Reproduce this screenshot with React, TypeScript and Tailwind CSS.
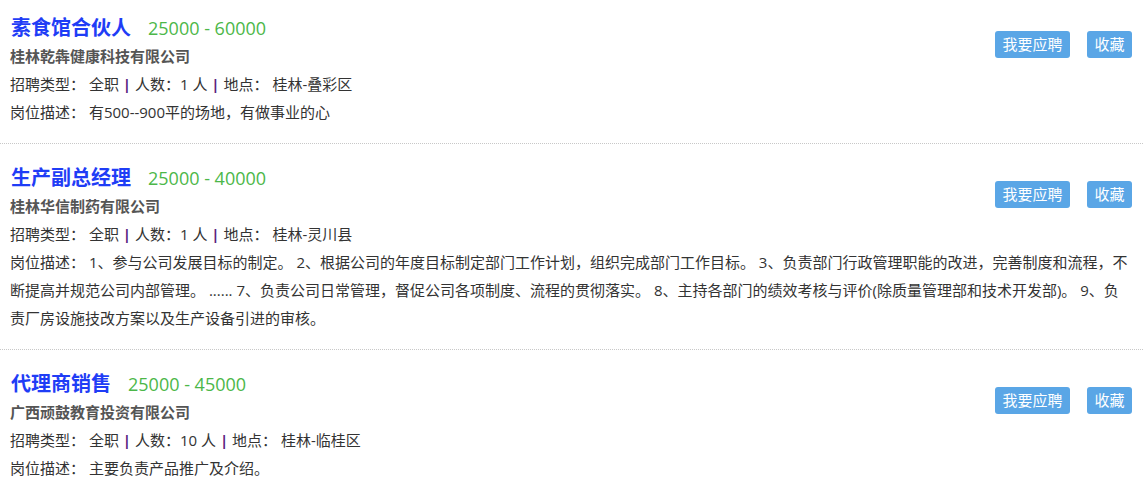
import React from "react";

type Job = {
  title: string;
  salary: string;
  company: string;
  count: string;
  place: string;
  desc: string;
};

const jobs: Job[] = [
  {
    title: "素食馆合伙人",
    salary: "25000 - 60000",
    company: "桂林乾犇健康科技有限公司",
    count: "1",
    place: "桂林-叠彩区",
    desc: "有500--900平的场地，有做事业的心",
  },
  {
    title: "生产副总经理",
    salary: "25000 - 40000",
    company: "桂林华信制药有限公司",
    count: "1",
    place: "桂林-灵川县",
    desc: "1、参与公司发展目标的制定。 2、根据公司的年度目标制定部门工作计划，组织完成部门工作目标。 3、负责部门行政管理职能的改进，完善制度和流程，不断提高并规范公司内部管理。 ...... 7、负责公司日常管理，督促公司各项制度、流程的贯彻落实。 8、主持各部门的绩效考核与评价(除质量管理部和技术开发部)。 9、负责厂房设施技改方案以及生产设备引进的审核。",
  },
  {
    title: "代理商销售",
    salary: "25000 - 45000",
    company: "广西顽鼓教育投资有限公司",
    count: "10",
    place: "桂林-临桂区",
    desc: "主要负责产品推广及介绍。",
  },
];

export default function App() {
  return (
    <div
      className="w-[1143px] h-[484px] overflow-hidden bg-white text-[15px] text-[#333]"
      style={{ fontFamily: "'Open Sans', 'Noto Sans CJK SC', sans-serif" }}
    >
      {jobs.map((j, i) => (
        <div
          key={i}
          className={
            (i === 0 ? "pt-[14px] " : "pt-[20px] ") +
            "pb-[17px] pl-[10px] pr-[10px] border-b border-dotted border-[#c8c8c8]"
          }
        >
          <div className="float-right mt-[17px] mr-px flex gap-[17px]">
            <button className="h-[27px] px-[7.5px] rounded-[3px] bg-[#5aa6e6] text-white text-[15px] leading-[27px]">
              我要应聘
            </button>
            <button className="h-[27px] px-[7.5px] rounded-[3px] bg-[#5aa6e6] text-white text-[15px] leading-[27px]">
              收藏
            </button>
          </div>
          <div className="h-[28px] leading-[28px] flex items-baseline pl-px">
            <span className="text-[20px] font-bold text-[#1f3df6]">{j.title}</span>
            <span className="ml-[17px] text-[18px] text-[#4cb749]">{j.salary}</span>
          </div>
          <div className="leading-[28px] font-bold text-[#555]">{j.company}</div>
          <div className="leading-[28px]">
            <span>招聘类型： 全职 </span>
            <span className="font-bold text-[#5a2280]">|</span>
            <span> 人数：{j.count} 人 </span>
            <span className="font-bold text-[#5a2280]">|</span>
            <span> 地点： {j.place}</span>
          </div>
          <div className="leading-[28px]">岗位描述： {j.desc}</div>
        </div>
      ))}
    </div>
  );
}
